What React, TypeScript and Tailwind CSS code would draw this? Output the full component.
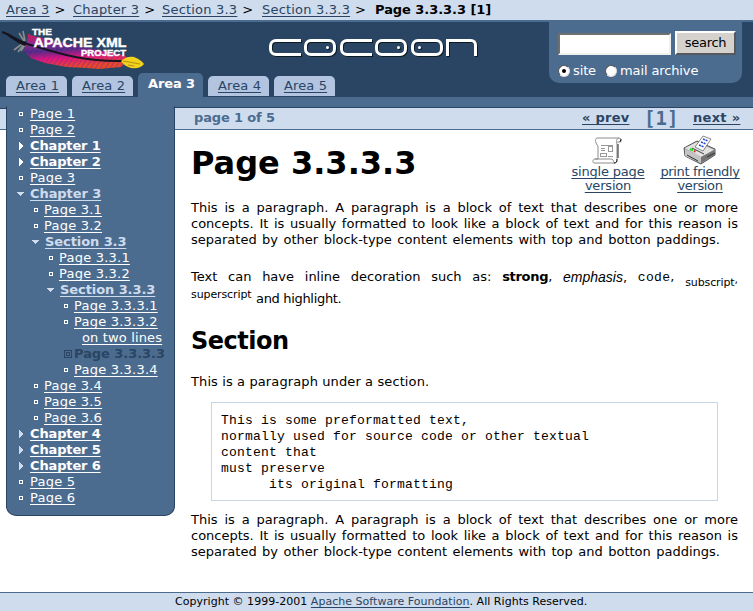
import type { ReactNode } from "react";

type Kind = "leaf" | "closed" | "faded" | "open" | "current" | "none";

interface NavItem {
  label: string;
  kind: Kind;
  level: 1 | 2 | 3 | 4 | 5;
}

const NAV: NavItem[] = [
  { label: "Page 1", kind: "leaf", level: 1 },
  { label: "Page 2", kind: "leaf", level: 1 },
  { label: "Chapter 1", kind: "closed", level: 1 },
  { label: "Chapter 2", kind: "closed", level: 1 },
  { label: "Page 3", kind: "leaf", level: 1 },
  { label: "Chapter 3", kind: "open", level: 1 },
  { label: "Page 3.1", kind: "leaf", level: 2 },
  { label: "Page 3.2", kind: "leaf", level: 2 },
  { label: "Section 3.3", kind: "open", level: 2 },
  { label: "Page 3.3.1", kind: "leaf", level: 3 },
  { label: "Page 3.3.2", kind: "leaf", level: 3 },
  { label: "Section 3.3.3", kind: "open", level: 3 },
  { label: "Page 3.3.3.1", kind: "leaf", level: 4 },
  { label: "Page 3.3.3.2", kind: "leaf", level: 4 },
  { label: "on two lines", kind: "none", level: 5 },
  { label: "Page 3.3.3.3", kind: "current", level: 4 },
  { label: "Page 3.3.3.4", kind: "leaf", level: 4 },
  { label: "Page 3.4", kind: "leaf", level: 2 },
  { label: "Page 3.5", kind: "leaf", level: 2 },
  { label: "Page 3.6", kind: "leaf", level: 2 },
  { label: "Chapter 4", kind: "faded", level: 1 },
  { label: "Chapter 5", kind: "faded", level: 1 },
  { label: "Chapter 6", kind: "faded", level: 1 },
  { label: "Page 5", kind: "leaf", level: 1 },
  { label: "Page 6", kind: "leaf", level: 1 },
];

const INDENT = {
  1: "pl-[9px]",
  2: "pl-[23px]",
  3: "pl-[38px]",
  4: "pl-[53px]",
  5: "pl-[61px]",
};

const LABEL: Record<Kind, string> = {
  leaf: "text-white underline tracking-[0.22px]",
  none: "text-white underline tracking-[0.15px]",
  closed: "text-white font-bold underline tracking-[-0.13px]",
  faded: "text-white font-bold underline tracking-[-0.13px]",
  open: "text-[#cfdced] font-bold underline tracking-[-0.08px]",
  current: "text-[#294563] font-bold tracking-[-0.05px]",
};

function Marker({ kind, nested }: { kind: Kind; nested: boolean }) {
  return (
    <svg width="14" height="16" viewBox="0 0 14 16" className="shrink-0" shapeRendering="crispEdges">
      {kind === "leaf" && (
        <rect x={nested ? 4.5 : 3.5} y="6.5" width="3" height="3" fill="none" stroke="#fff" />
      )}
      {(kind === "closed" || kind === "faded") && (
        <path d="M3 4v8l4-4z" fill={kind === "closed" ? "#fff" : "#cfdced"} />
      )}
      {kind === "open" && <path d="M1 6h7l-3.5 4z" fill="#cfdced" />}
      {kind === "current" && (
        <g stroke="#294563" fill="none">
          <rect x="4.5" y="4.5" width="7" height="7" />
          <rect x="6.5" y="6.5" width="3" height="3" />
        </g>
      )}
    </svg>
  );
}

function Crumb({ children, className }: { children: ReactNode; className: string }) {
  return (
    <span className={`flex ${className}`}>
      <a className="mr-[5px] tracking-[0.2px] text-[#294563] underline">{children}</a>
      <span>&gt;</span>
    </span>
  );
}

function Tab({ label }: { label: string }) {
  return (
    <a className="flex h-[20px] w-[61px] justify-center rounded-t-[5px] bg-[#b2c4e0] pt-[2px] pl-[2px] leading-4 tracking-[0.15px] text-[#294563] underline">
      {label}
    </a>
  );
}

function ApacheLogo() {
  return (
    <svg width="148" height="50" viewBox="0 0 148 50" className="block">
      <defs>
        <linearGradient id="plume" x1="0" y1="0" x2="0.25" y2="1">
          <stop offset="0" stopColor="#e6194f" />
          <stop offset="0.3" stopColor="#8c2a8c" />
          <stop offset="0.5" stopColor="#4b2b86" />
          <stop offset="0.72" stopColor="#e5127f" />
          <stop offset="1" stopColor="#ec4a24" />
        </linearGradient>
        <pattern id="barbs" width="4" height="4" patternUnits="userSpaceOnUse" patternTransform="rotate(35)">
          <rect width="1.2" height="4" fill="#7a2b8f" opacity="0.55" />
        </pattern>
      </defs>
      <path d="M28 12l5 2 60 13 30 6 7 4-9 8-22 2-12-1-20-1-22-4-14-5-7-7 3-9z" fill="url(#plume)" />
      <path d="M28 12l5 2 60 13 30 6 7 4-9 8-22 2-12-1-20-1-22-4-14-5-7-7 3-9z" fill="url(#barbs)" />
      <path d="M19 11l5 8M23 9l2 10M14 28l8-6M18 30l6-8M21 29l4-6" stroke="#8d8d8d" strokeWidth="1.6" />
      <path d="M2 10c8 2 13 9 22 11 28 8 55 19 99 18" stroke="#151520" strokeWidth="2" fill="none" />
      <path d="M2 10c7 0 14 7 24 10l-1 4C15 20 9 14 2 10z" fill="#151520" />
      <path d="M121 39c4-4 9-5 13-4 5 2 8 4 10 7-3 4-8 5-13 4-4-1-7-3-10-7z" fill="#f2d31c" />
      <path d="M123 39l17 3M128 43l6 1" stroke="#a77c13" strokeWidth="0.8" />
      <g fill="#fff" className="font-['Liberation_Sans',sans-serif] font-bold" stroke="#fff" strokeWidth="0.4">
        <text x="32" y="13" fontSize="9" textLength="20" lengthAdjust="spacingAndGlyphs">THE</text>
        <text x="33.5" y="25" fontSize="13" textLength="93" lengthAdjust="spacingAndGlyphs">APACHE XML</text>
        <text x="81" y="34" fontSize="8.5" textLength="45" lengthAdjust="spacingAndGlyphs">PROJECT</text>
      </g>
    </svg>
  );
}

function CocoonLogo() {
  const c = "h-[17px] w-8 rounded-l-[7px] border-[3px] border-r-0 border-white";
  const o = "flex h-[17px] w-8 items-center rounded-[7px] border-[3px] border-white px-[4px]";
  const eye = "size-[3px] rounded-full bg-white";
  return (
    <div className="flex gap-[3.4px] [filter:drop-shadow(1.5px_1.5px_0px_#0c1b22)]">
      <div className={c} />
      <div className={`justify-end ${o}`}><i className={eye} /></div>
      <div className={c} />
      <div className={`justify-end ${o}`}><i className={eye} /></div>
      <div className={o}><i className={eye} /></div>
      <div className="h-[17px] w-[31px] rounded-tr-[6px] border-[3px] border-b-0 border-white" />
    </div>
  );
}

function ScrollIcon() {
  return (
    <svg width="32" height="28" viewBox="0 0 32 28" className="block">
      <path d="M5 1h22c-3 1-3 4-2 6v13c0 4 1 5-2 6H2c-2-1-1-4 1-4h3V9C4 7 2 2 5 1z" fill="#fff" stroke="#8c8c8c" />
      <path d="M27 1c3 0 3 4 1 4h-3M3 22h17c2 1 1 4 3 4" fill="none" stroke="#8c8c8c" />
      <path d="M26 7v14M25 22c0 3-1 4-3 4M28 5l1-3" stroke="#222" fill="none" />
      <g stroke="#999" fill="none" shapeRendering="crispEdges">
        <path d="M9 8.5h12M9 11.5h4M9 13.5h4M16 19.5h5M9 19.5h4" />
        <rect x="16.5" y="9.5" width="4" height="5" />
        <rect x="8.5" y="16.5" width="6" height="3" />
      </g>
    </svg>
  );
}

function PrinterIcon() {
  return (
    <svg width="34" height="30" viewBox="0 0 34 30" className="block">
      <path d="M1 13l13-7 18 8v6L18 29 2 21z" fill="#a9a9a9" stroke="#555" />
      <path d="M2 13l12-6 17 8-13 7z" fill="#e2e2e2" />
      <path d="M18 22l13-7v5l-13 8z" fill="#747474" />
      <path d="M2 14l16 8v6L2 21z" fill="#c4c4c4" />
      <path d="M4 20l11 6M24 22l8-4" stroke="#333" />
      <path d="M12 12l8-11 8 3-8 12z" fill="#fff" stroke="#555" strokeWidth="0.7" />
      <path d="M20 4l5 2M18 7l5 2M16 10l5 2" stroke="#2848c8" strokeWidth="1.6" strokeDasharray="2 0.8" />
      <path d="M9 13l12 6" stroke="#444" />
      <path d="M7 14l3 1.5" stroke="#22dd22" strokeWidth="2" />
      <path d="M11 16l1.5.7" stroke="#dd2222" strokeWidth="2" />
    </svg>
  );
}

function BlockParagraph() {
  return (
    <div className="leading-4">
      <p className="whitespace-nowrap [text-align-last:justify]">
        This is a paragraph. A paragraph is a block of text that describes one or more
      </p>
      <p className="whitespace-nowrap [text-align-last:justify]">
        concepts. It is usually formatted to look like a block of text and for this reason is
      </p>
      <p className="w-[529px] whitespace-nowrap [text-align-last:justify]">
        separated by other block-type content elements with top and botton paddings.
      </p>
    </div>
  );
}

export default function App() {
  return (
    <div className="flex h-[611px] w-[753px] flex-col overflow-hidden bg-white font-['DejaVu_Sans',Verdana,sans-serif] text-[13px] leading-4 text-black underline-offset-2 [text-decoration-skip-ink:none]">
      <div className="flex h-[22px] shrink-0 border-b-2 border-[#4c6c8f] bg-[#cfdced] pt-[2px] pl-[6px] whitespace-nowrap">
        <Crumb className="w-[67px]">Area 3</Crumb>
        <Crumb className="w-[89px]">Chapter 3</Crumb>
        <Crumb className="w-[100px]">Section 3.3</Crumb>
        <Crumb className="w-[113px]">Section 3.3.3</Crumb>
        <b className="tracking-[-0.05px]">Page 3.3.3.3 [1]</b>
      </div>

      <header className="flex h-[75px] shrink-0 bg-[#294563]">
        <div className="flex w-[268px] shrink-0 flex-col">
          <div className="h-[51px] shrink-0">
            <ApacheLogo />
          </div>
          <nav className="flex items-end gap-[5px] pl-[6px]">
            <div className="flex shrink-0 items-end gap-[5px] pb-px">
              <Tab label="Area 1" />
              <Tab label="Area 2" />
            </div>
            <b className="flex h-6 w-[65px] shrink-0 justify-center rounded-t-[5px] bg-[#4c6c8f] pt-[3px] pl-[2px] tracking-[-0.1px] text-white">
              Area 3
            </b>
            <div className="flex shrink-0 items-end gap-[5px] pb-px">
              <Tab label="Area 4" />
              <Tab label="Area 5" />
            </div>
          </nav>
        </div>
        <div className="w-[281px] shrink-0 pt-[17px] pl-px">
          <CocoonLogo />
        </div>
        <form className="h-[61px] w-[193px] rounded-b-[10px] bg-[#4c6c8f] pt-[9px] pl-[9px] text-white">
          <div className="flex items-end gap-1">
            <div className="h-[22px] w-[113px] border-2 border-t-[#6f6f6f] border-r-[#f0f0ee] border-b-[#f0f0ee] border-l-[#6f6f6f] bg-white" />
            <div className="flex h-6 w-[61px] items-center justify-center border-2 border-t-white border-r-[#57585c] border-b-[#57585c] border-l-white bg-[#d5d2cd] tracking-[-0.3px] text-black">
              search
            </div>
          </div>
          <div className="mt-[8px] flex items-center tracking-[-0.12px]">
            <i className="mr-[3px] flex size-3 items-center justify-center rounded-full border border-t-[#555] border-r-[#ddd] border-b-[#ddd] border-l-[#555] bg-white">
              <i className="size-1 rounded-full bg-black" />
            </i>
            <span className="w-8">site</span>
            <i className="mr-[3px] size-3 rounded-full border border-t-[#555] border-r-[#ddd] border-b-[#ddd] border-l-[#555] bg-white" />
            <span>mail archive</span>
          </div>
        </form>
      </header>

      <div className="flex h-[495px] shrink-0">
        <div className="w-[6px] shrink-0">
          <div className="h-[11px] bg-[#4c6c8f]" />
          <div className="h-[22px] border-y border-t-[#294563] border-b-[#4c6c8f] bg-[#cfdced]" />
        </div>
        <aside className="w-[169px] shrink-0">
          <div className="h-[9px] bg-[#4c6c8f]" />
          <ul className="h-[410px] rounded-b-[10px] border border-t-0 border-[#294563] bg-[#4c6c8f]">
            {NAV.map((item, i) => (
              <li
                key={i}
                className={`flex h-4 items-center whitespace-nowrap ${INDENT[item.level]} ${item.kind === "open" && item.level > 1 ? "ml-px" : ""}`}
              >
                <Marker kind={item.kind} nested={item.level > 1} />
                <a className={LABEL[item.kind]}>{item.label}</a>
              </li>
            ))}
          </ul>
        </aside>
        <main className="min-w-0 flex-1">
          <div className="h-[10px] bg-[#4c6c8f]" />
          <div className="flex h-[23px] border-y border-t-[#294563] border-b-[#4c6c8f] bg-[#cfdced] pt-[2px] pl-[19px] font-bold whitespace-nowrap">
            <span className="w-[388px] shrink-0 tracking-[-0.15px] text-[#4c6c8f]">page 1 of 5</span>
            <a className="w-[62px] shrink-0 tracking-[0.25px] text-[#294563] underline">« prev</a>
            <span className="w-[49px] shrink-0 font-['DejaVu_Sans_Mono',monospace] text-[19px] text-[#4c6c8f]">[1]</span>
            <a className="tracking-[0.3px] text-[#294563] underline">next »</a>
          </div>
          <div className="pr-[15px] pl-4">
            <div className="flex h-[70px]">
              <h1 className="w-[375px] shrink-0 pt-[14px] text-[32px] leading-[38px] font-bold whitespace-nowrap">
                Page 3.3.3.3
              </h1>
              <div className="flex w-[84px] shrink-0 flex-col items-center pt-[7px] text-center leading-[14px] whitespace-nowrap text-[#294563] underline">
                <ScrollIcon />
                <a className="tracking-[-0.2px]">single page<br />version</a>
              </div>
              <div className="ml-[4px] flex w-[92px] shrink-0 flex-col items-center pt-[5px] text-center leading-[14px] whitespace-nowrap text-[#294563] underline">
                <PrinterIcon />
                <a className="tracking-[-0.35px]">print friendly<br />version</a>
              </div>
            </div>
            <BlockParagraph />
            <p className="mt-5 flex h-4 justify-between pt-px whitespace-nowrap">
              <span>Text</span>
              <span>can</span>
              <span>have</span>
              <span>inline</span>
              <span>decoration</span>
              <span>such</span>
              <span>as:</span>
              <span><b className="tracking-[-0.3px]">strong</b>,</span>
              <span><em className="font-['Liberation_Sans',sans-serif] text-[14px]">emphasis</em>,</span>
              <span><code className="font-['Liberation_Mono',monospace] text-[13px] tracking-[0.3px]">code</code>,</span>
              <span className="flex text-[11px] tracking-[-0.1px]">
                <span className="pt-[6px]">subscript</span>
                <span className="pt-[3px]">,</span>
              </span>
            </p>
            <p className="mt-[7px] flex h-4 whitespace-nowrap">
              <span className="-mt-[4px] w-[65px] text-[11px] tracking-[-0.1px]">superscript</span>
              <span className="tracking-[-0.32px]">and highlight.</span>
            </p>
            <h2 className="mt-5 text-[24px] leading-7 font-bold tracking-[-0.5px]">Section</h2>
            <p className="mt-[19px] tracking-[0.11px]">This is a paragraph under a section.</p>
            <pre className="mt-3 ml-5 h-[99px] w-[507px] border border-[#c6d7e7] pt-[10px] pl-[9px] font-['Liberation_Mono',monospace] text-[13px] leading-4 tracking-[0.2px]">
{`This is some preformatted text,
normally used for source code or other textual
content that
must preserve
      its original formatting`}
            </pre>
            <div className="mt-[11px]">
              <BlockParagraph />
            </div>
          </div>
        </main>
      </div>

      <footer className="h-[19px] shrink-0 border-t border-[#4c6c8f] bg-[#cfdced] pl-[175px] text-[11px] leading-[17px] tracking-[0.03px] whitespace-nowrap">
        Copyright © 1999-2001 <a className="text-[#294563] underline">Apache Software Foundation</a>. All Rights Reserved.
      </footer>
    </div>
  );
}
